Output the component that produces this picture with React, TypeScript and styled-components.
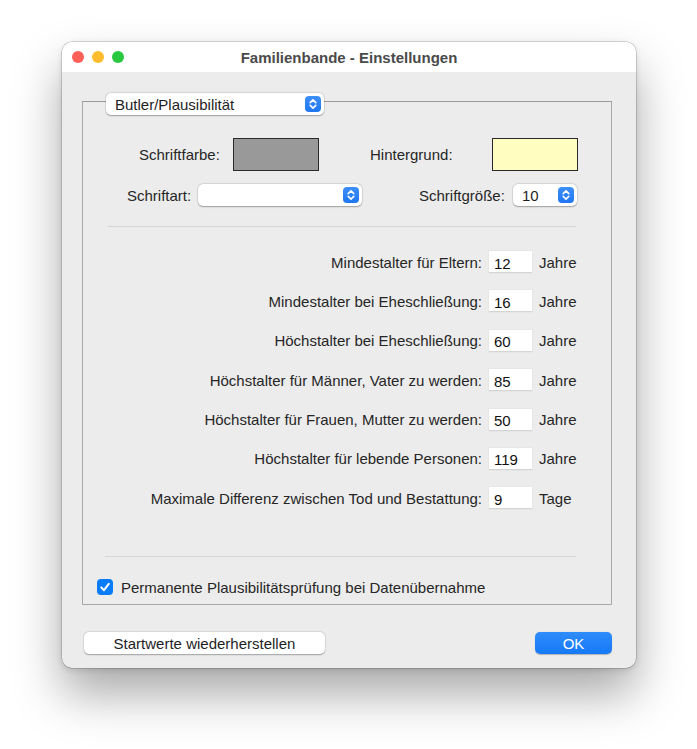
import React from "react";
import styled, { createGlobalStyle } from "styled-components";

const Global = createGlobalStyle`
  html, body { margin: 0; padding: 0; background: #ffffff; }
  body { font-family: "Liberation Sans", Arial, sans-serif; font-size: 15px; color: #262626; }
  * { box-sizing: border-box; }
`;

const Page = styled.div`
  padding: 42px 0 0 62px;
  height: 749px;
`;

const Window = styled.div`
  width: 574px;
  height: 626px;
  border-radius: 10px;
  overflow: hidden;
  background: #ececec;
  box-shadow: 0 26px 48px rgba(0, 0, 0, 0.34), 0 0 0 0.5px rgba(0, 0, 0, 0.28), 0 2px 6px rgba(0,0,0,0.12);
  display: flex;
  flex-direction: column;
`;

const TitleBar = styled.div`
  height: 30px;
  flex: none;
  background: #ffffff;
  display: flex;
  align-items: center;
  padding-left: 10px;
`;

const Lights = styled.div`
  display: flex;
  gap: 8px;
`;

const Light = styled.span<{ $c: string }>`
  width: 12px;
  height: 12px;
  border-radius: 50%;
  background: ${(p) => p.$c};
`;

const Title = styled.div`
  flex: 1;
  text-align: center;
  font-weight: 700;
  font-size: 15px;
  color: #4a4a4a;
  margin-right: 62px;
  margin-top: 1px;
`;

const Body = styled.div`
  flex: 1;
  display: flex;
  flex-direction: column;
  padding: 29px 24px 14px 20px;
`;

const GroupBox = styled.div`
  height: 504px;
  border: 1px solid #a9a9a9;
  border-top-color: #9a9a9a;
  display: flex;
  flex-direction: column;
`;

const PopupButton = styled.div<{ $w: number }>`
  width: ${(p) => p.$w}px;
  height: 22px;
  background: #ffffff;
  border-radius: 5px;
  box-shadow: 0 0.5px 1.5px rgba(0, 0, 0, 0.3), 0 0 0 0.5px rgba(0, 0, 0, 0.08);
  display: flex;
  align-items: center;
  justify-content: space-between;
  padding: 0 3px 0 9px;
  font-size: 15px;
  color: #1e1e1e;
  flex: none;
`;

const TopPopup = styled(PopupButton)`
  margin: -9px 0 0 23px;
`;

const Stepper = styled.span`
  width: 16px;
  height: 16px;
  border-radius: 4px;
  background: linear-gradient(#3d8ff8, #1f76f0);
  display: flex;
  align-items: center;
  justify-content: center;
`;

const Row = styled.div<{ $top: number; $left: number; $h: number }>`
  display: flex;
  align-items: center;
  margin-top: ${(p) => p.$top}px;
  padding-left: ${(p) => p.$left}px;
  height: ${(p) => p.$h}px;
`;

const Label = styled.span<{ $w: number }>`
  width: ${(p) => p.$w}px;
  flex: none;
  white-space: nowrap;
`;

const Swatch = styled.span<{ $c: string }>`
  width: 86px;
  height: 33px;
  background: ${(p) => p.$c};
  border: 1px solid #2a2a2a;
  flex: none;
`;

const Spacer = styled.span<{ $w: number }>`
  width: ${(p) => p.$w}px;
  flex: none;
`;

const Separator = styled.div<{ $top: number; $left: number }>`
  height: 1px;
  background: #d6d6d6;
  margin: ${(p) => p.$top}px 35px 0 ${(p) => p.$left}px;
`;

const FieldGrid = styled.div`
  margin-top: 24px;
  display: grid;
  grid-template-columns: 1fr 43px 40px;
  column-gap: 7px;
  row-gap: 17.4px;
  padding-right: 32px;
  align-items: center;
`;

const FieldLabel = styled.span`
  text-align: right;
  white-space: nowrap;
`;

const NumField = styled.span`
  height: 22px;
  background: #ffffff;
  box-shadow: inset 0 -1px 0 #d4d4d4, 0 0 0 0.5px rgba(0,0,0,0.05);
  display: flex;
  align-items: center;
  padding: 2px 0 0 5px;
  color: #111;
`;

const Unit = styled.span`
  white-space: nowrap;
`;

const CheckRow = styled.label`
  display: flex;
  align-items: center;
  gap: 8px;
  margin: 21px 0 0 14px;
  height: 18px;
`;

const CheckBox = styled.span`
  width: 16px;
  height: 16px;
  border-radius: 4px;
  background: #0b7cf8;
  display: flex;
  align-items: center;
  justify-content: center;
`;

const ButtonRow = styled.div`
  display: flex;
  justify-content: space-between;
  align-items: center;
  margin-top: 27px;
  padding-left: 2px;
`;

const PushButton = styled.button<{ $primary?: boolean; $w: number }>`
  width: ${(p) => p.$w}px;
  height: 22px;
  border: none;
  border-radius: 5px;
  font-family: inherit;
  font-size: 15px;
  padding: 0;
  color: ${(p) => (p.$primary ? "#ffffff" : "#1e1e1e")};
  background: ${(p) => (p.$primary ? "linear-gradient(#2f8cfb, #1579f6)" : "#ffffff")};
  box-shadow: ${(p) =>
    p.$primary ? "0 0.5px 1px rgba(0,0,0,0.25)" : "0 0.5px 1.5px rgba(0,0,0,0.3), 0 0 0 0.5px rgba(0,0,0,0.06)"};
`;

const StepIcon = () => (
  <Stepper>
    <svg width="16" height="16" viewBox="0 0 16 16" fill="none">
      <path d="M5.2 6.6 L8 3.9 L10.8 6.6" stroke="#fff" strokeWidth="1.6" strokeLinecap="round" strokeLinejoin="round" />
      <path d="M5.2 9.4 L8 12.1 L10.8 9.4" stroke="#fff" strokeWidth="1.6" strokeLinecap="round" strokeLinejoin="round" />
    </svg>
  </Stepper>
);

const rows: [string, string, string][] = [
  ["Mindestalter für Eltern:", "12", "Jahre"],
  ["Mindestalter bei Eheschließung:", "16", "Jahre"],
  ["Höchstalter bei Eheschließung:", "60", "Jahre"],
  ["Höchstalter für Männer, Vater zu werden:", "85", "Jahre"],
  ["Höchstalter für Frauen, Mutter zu werden:", "50", "Jahre"],
  ["Höchstalter für lebende Personen:", "119", "Jahre"],
  ["Maximale Differenz zwischen Tod und Bestattung:", "9", "Tage"],
];

export default function App() {
  return (
    <>
      <Global />
      <Page>
        <Window>
          <TitleBar>
            <Lights>
              <Light $c="#fe5f57" />
              <Light $c="#febc2e" />
              <Light $c="#28c840" />
            </Lights>
            <Title>Familienbande - Einstellungen</Title>
          </TitleBar>
          <Body>
            <GroupBox>
              <TopPopup $w={218}>
                <span>Butler/Plausibilität</span>
                <StepIcon />
              </TopPopup>
              <Row $top={23} $left={56} $h={33}>
                <Label $w={94}>Schriftfarbe:</Label>
                <Swatch $c="#999999" />
                <Spacer $w={51} />
                <Label $w={122}>Hintergrund:</Label>
                <Swatch $c="#fffdc0" />
              </Row>
              <Row $top={13} $left={44} $h={22}>
                <Label $w={71}>Schriftart:</Label>
                <PopupButton $w={164}>
                  <span />
                  <StepIcon />
                </PopupButton>
                <Spacer $w={57} />
                <Label $w={94}>Schriftgröße:</Label>
                <PopupButton $w={64}>
                  <span>10</span>
                  <StepIcon />
                </PopupButton>
              </Row>
              <Separator $top={20} $left={25} />
              <FieldGrid>
                {rows.map(([l, v, u]) => (
                  <React.Fragment key={l}>
                    <FieldLabel>{l}</FieldLabel>
                    <NumField>{v}</NumField>
                    <Unit>{u}</Unit>
                  </React.Fragment>
                ))}
              </FieldGrid>
              <Separator $top={47} $left={22} />
              <CheckRow>
                <CheckBox>
                  <svg width="16" height="16" viewBox="0 0 16 16" fill="none">
                    <path d="M4.3 8.4 L7 11.2 L11.8 4.8" stroke="#fff" strokeWidth="2" strokeLinecap="round" strokeLinejoin="round" />
                  </svg>
                </CheckBox>
                <span>Permanente Plausibilitätsprüfung bei Datenübernahme</span>
              </CheckRow>
            </GroupBox>
            <ButtonRow>
              <PushButton $w={241}>Startwerte wiederherstellen</PushButton>
              <PushButton $w={77} $primary>OK</PushButton>
            </ButtonRow>
          </Body>
        </Window>
      </Page>
    </>
  );
}
